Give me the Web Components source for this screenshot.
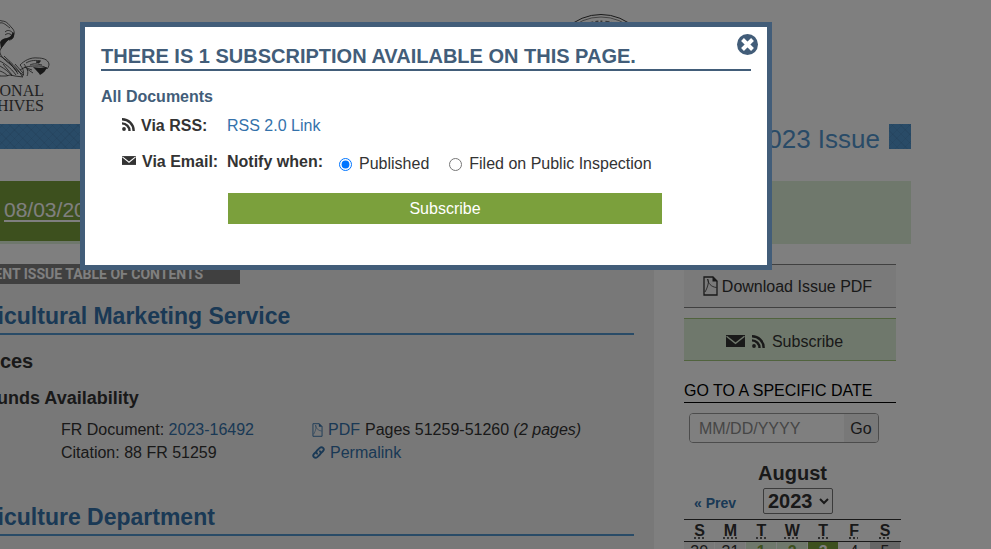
<!DOCTYPE html>
<html lang="en">
<head>
<meta charset="utf-8">
<meta name="viewport" content="width=device-width, initial-scale=1">
<title>Federal Register - Current Issue</title>
<style>
    :root {
        --link: #3472ab;
        --bar: #5396cf;
        --navy: #425d79;
        --green: #7ba03c;
        --pale-green: #dff0d8;
        --text: #333;
    }
    body {
        margin: 0;
        overflow: hidden;
        background: #fff;
        color: var(--text);
        font: 16px/23px "Liberation Sans", Arial, sans-serif;
    }
    main {
        display: block;
        margin: 0 80px 0 -42px;
    }
    .columns {
        display: flex;
        align-items: flex-start;
        gap: 30px;
        margin-top: 20px;
        padding-right: 15px;
    }
    contents-panel { flex: 1; min-width: 0; }
    .sidebar { flex: 0 0 212px; min-width: 0; }
</style>
</head>
<body>
<main>
    <site-header></site-header>
    <issue-bar>2023 Issue</issue-bar>
    <issue-banner><a slot="date" href="#">08/03/2023</a></issue-banner>
    <div class="columns">
        <contents-panel label="Current Issue Table of Contents">
            <agency-section name="Agricultural Marketing Service">
                <document-entry kind="Notices" subject="Funds Availability" number="2023-16492" citation="88 FR 51259" pages="51259-51260" count="2"></document-entry>
            </agency-section>
            <agency-section name="Agriculture Department"></agency-section>
        </contents-panel>
        <aside class="sidebar">
            <action-box><fr-icon name="pdf" size="20"></fr-icon>Download Issue PDF</action-box>
            <action-box tone="green"><fr-icon name="mail" size="19"></fr-icon><fr-icon name="rss" size="13"></fr-icon>Subscribe</action-box>
            <date-search></date-search>
            <month-calendar month="August" year="2023"></month-calendar>
        </aside>
    </div>
</main>
<subscription-modal heading="There is 1 subscription available on this page."></subscription-modal>

<script>
// name -> [viewBox width, viewBox height, markup]
const ICONS = {
    rss: [13, 13, '<circle cx="2" cy="11" r="1.9" fill="currentColor"/><path d="M0 5.4a7.5 7.5 0 0 1 7.5 7.6M0 1.3A11.6 11.6 0 0 1 11.7 13" fill="none" stroke="currentColor" stroke-width="2.4"/>'],
    mail: [19, 12, '<path d="M0 0h19v12H0z" fill="currentColor"/><path d="M.5 1.2l9 7.2 9-7.2" fill="none" stroke="var(--icon-cut, #fff)" stroke-width="1.4"/>'],
    pdf: [15, 20, '<path d="M1 1h9l4 4v14H1z" fill="none" stroke="currentColor" stroke-width="1.3"/><path d="M9.500 .5v5h5z" fill="currentColor"/><path d="M4.500 3c2 1 .5 8-2.500 13M4.500 3c.5 4 3.500 8 9 8.500" fill="none" stroke="currentColor" stroke-width=".8"/>'],
    link: [13, 13, '<g fill="none" stroke="currentColor" stroke-width="1.900" stroke-linecap="round"><path d="M5 7.700C3.700 6.300 4.400 5 5.300 4.200L7.800 1.900c2.300-2 5.200.9 3.300 3.100L9.500 6.700"/><path d="M8 5.300c1.300 1.400.6 2.700-.3 3.500l-2.500 2.300c-2.300 2-5.200-.9-3.300-3.100l1.600-1.700"/></g>'],
    close: [21, 21, '<circle cx="10.500" cy="10.500" r="10.500" fill="currentColor"/><path d="M5.500 5.500l10 10m0-10l-10 10" stroke="#fff" stroke-width="4"/>']
};

class FrIcon extends HTMLElement {
    connectedCallback() {
        const [w, h, markup] = ICONS[this.getAttribute('name')];
        const size = Number(this.getAttribute('size')) || Math.max(w, h);
        const scale = size / Math.max(w, h);
        this.attachShadow({ mode: 'open' });
        this.shadowRoot.innerHTML = `
            <style>
                :host { display: inline-block; flex: none; line-height: 0; }
                svg { display: block; }
            </style>
            <svg width="${Math.round(w * scale)}" height="${Math.round(h * scale)}" viewBox="0 0 ${w} ${h}" aria-hidden="true">${markup}</svg>
        `;
    }
}

class SiteHeader extends HTMLElement {
    connectedCallback() {
        this.attachShadow({ mode: 'open' });
        this.shadowRoot.innerHTML = `
            <style>
                :host {
                    display: flex;
                    align-items: flex-start;
                    height: 124px;
                }
                .archives {
                    width: 92px;
                    padding-top: 18px;
                    color: #444;
                    font: 16px/15px "Liberation Serif", serif;
                    text-align: right;
                    text-decoration: none;
                }
                .archives svg { display: block; margin-bottom: 4px; }
                .archives span { display: block; margin-right: 6px; }
                .seal { margin: 14px 260px 0 auto; }
            </style>
            <a class="archives" href="#">
                <svg width="92" height="61" viewBox="-42 18 92 61" fill="none" stroke="#333" stroke-width=".8" aria-hidden="true">
                    <path d="M-20 34C-12 20-4 19 2 21c5 0 7 4 10 7 3 3 3 7 0 9-2 1-4 2-6 5-3 4-7 7-6 11 2 6 8 9 12 13 4 3 7 7 12 9"/>
                    <path d="M0 23c3-1 6 2 10 5M5 32c3-3 6-1 8 1 2 4-1 7-4 7 3-2 4-5 1-6-2-1-4 0-5 1"/>
                    <path d="M13 32c2 2 1 5-1 7-2 0-4 1-6 3l-5 7-1-7c2-3 4-4 7-4 3-1 4-2 6-6z" fill="#333" stroke="none"/>
                    <path d="M0 61c5 3 10 6 16 14M0 56c6 3 13 9 18 18M0 66c5 3 9 6 12 10M0 71c3 1 6 3 8 5M4 56c5 5 13 11 18 20M0 76l6 0 4-1 5 1 8 1M20 65c3 3 5 8 2 12M24 64c3 4 5 8 3 12M15 64l8 9M9 62l8 10M3 64l9 11M-12 56c5 5 8 13 12 20"/>
                    <path d="M20 65c4-4 10-8 18-7 4 0 10 1 11 6 0 2-1 4-2 5-2-3-6-3-10-3-6 0-11 0-17 4M26 63c5-3 10-3 15-2M30 65c4-2 8-1 12 0M24 67l8 3M27 69l6 4"/>
                    <path d="M33 67c4 1 8 1 14 0-1 3-3 6-7 8-1-2-4-5-7-8z" fill="#333" stroke="none"/>
                    <path d="M36 62l4-1-1 2z" fill="#333"/>
                </svg>
                <span>NATIONAL</span>
                <span>ARCHIVES</span>
            </a>
            <svg class="seal" width="100" height="100" viewBox="0 0 100 100" fill="none" stroke="#333" aria-hidden="true">
                <circle cx="50" cy="50" r="49.500"/>
                <circle cx="50" cy="50" r="47" stroke-width=".6"/>
                <circle cx="50" cy="50" r="42" stroke-width="3" stroke-dasharray="3 2 2 3 4 2" opacity=".7"/>
                <circle cx="50" cy="50" r="35" stroke-width=".8"/>
            </svg>
        `;
    }
}

class IssueBar extends HTMLElement {
    connectedCallback() {
        this.attachShadow({ mode: 'open' });
        this.shadowRoot.innerHTML = `
            <style>
                :host {
                    display: flex;
                    justify-content: flex-end;
                    height: 25px;
                    padding-right: 22px;
                    background:
                        repeating-linear-gradient(45deg, transparent 0 5px, rgba(0, 0, 0, .05) 5px 6px),
                        repeating-linear-gradient(-45deg, transparent 0 5px, rgba(0, 0, 0, .05) 5px 6px),
                        var(--bar);
                }
                h1 {
                    margin: 0;
                    padding: 0 9px;
                    background: #fff;
                    color: var(--bar);
                    font-size: 26px;
                    font-weight: normal;
                    line-height: 30px;
                }
            </style>
            <h1><slot></slot></h1>
        `;
    }
}

class IssueBanner extends HTMLElement {
    connectedCallback() {
        this.attachShadow({ mode: 'open' });
        this.shadowRoot.innerHTML = `
            <style>
                :host {
                    display: block;
                    margin-top: 32px;
                    padding: 0 220px 3px 0;
                    background: var(--pale-green);
                }
                nav {
                    display: flex;
                    align-items: center;
                    height: 60px;
                    padding-left: 46px;
                    background: var(--green);
                }
                ::slotted(a) {
                    color: #fff;
                    font-size: 21px;
                    line-height: 20px;
                    border-bottom: 2px solid #fff;
                    text-decoration: none;
                }
            </style>
            <nav><slot name="date"></slot></nav>
        `;
    }
}

class ContentsPanel extends HTMLElement {
    connectedCallback() {
        this.attachShadow({ mode: 'open' });
        this.shadowRoot.innerHTML = `
            <style>
                :host {
                    display: block;
                    padding: 0 20px 40px 0;
                    background: #f0f0f0;
                }
                .tag {
                    width: fit-content;
                    padding: 0 37px 0 0;
                    background: #808080;
                    color: #fff;
                    font: bold 14px/20px Roboto, Arial, sans-serif;
                    text-transform: uppercase;
                }
            </style>
            <div class="tag">${this.getAttribute('label')}</div>
            <slot></slot>
        `;
    }
}

class AgencySection extends HTMLElement {
    connectedCallback() {
        this.attachShadow({ mode: 'open' });
        this.shadowRoot.innerHTML = `
            <style>
                :host { display: block; padding-top: 17px; }
                h2 {
                    margin: 0 0 14px;
                    padding-bottom: 2px;
                    border-bottom: 2px solid var(--bar);
                    color: var(--link);
                    font-size: 23px;
                    line-height: 30px;
                }
            </style>
            <h2>${this.getAttribute('name')}</h2>
            <slot></slot>
        `;
    }
}

class DocumentEntry extends HTMLElement {
    connectedCallback() {
        const get = (name) => this.getAttribute(name);
        this.attachShadow({ mode: 'open' });
        this.shadowRoot.innerHTML = `
            <style>
                :host { display: block; padding: 0 0 21px 3px; }
                h3 { margin: 0 0 13px; font-size: 20px; line-height: 24px; }
                h4 { margin: 0 0 8px 25px; font-size: 18px; line-height: 24px; }
                .details {
                    display: grid;
                    grid-template-columns: 251px 1fr;
                    padding-left: 100px;
                }
                a { color: var(--link); text-decoration: none; }
                .file { display: flex; align-items: center; gap: 5px; }
                .file a { display: flex; align-items: center; gap: 5px; }
            </style>
            <h3>${get('kind')}</h3>
            <h4>${get('subject')}</h4>
            <div class="details">
                <div>FR Document: <a href="#">${get('number')}</a></div>
                <div class="file"><a href="#"><fr-icon name="pdf" size="14"></fr-icon>PDF</a><span>Pages ${get('pages')} <em>(${get('count')} pages)</em></span></div>
                <div>Citation: ${get('citation')}</div>
                <div class="file"><a href="#"><fr-icon name="link" size="13"></fr-icon>Permalink</a></div>
            </div>
        `;
    }
}

class ActionBox extends HTMLElement {
    connectedCallback() {
        this.attachShadow({ mode: 'open' });
        this.shadowRoot.innerHTML = `
            <style>
                :host {
                    display: block;
                    margin-bottom: 10px;
                    --box: #f4f4f4;
                    --edge: #808080;
                }
                :host([tone="green"]) {
                    margin-bottom: 18px;
                    --box: var(--pale-green);
                    --edge: #a3c77c;
                    --icon-cut: var(--pale-green);
                    --gap: 7px;
                    --height: 43px;
                    --pad: 3px 11px 0 0;
                }
                a {
                    display: flex;
                    align-items: center;
                    justify-content: center;
                    gap: var(--gap, 4px);
                    box-sizing: border-box;
                    height: var(--height, 44px);
                    padding: var(--pad, 0 5px 0 0);
                    border: solid var(--edge);
                    border-width: 1px 0;
                    background: var(--box);
                    color: var(--text);
                    text-decoration: none;
                }
            </style>
            <a href="#"><slot></slot></a>
        `;
    }
}

class DateSearch extends HTMLElement {
    connectedCallback() {
        this.attachShadow({ mode: 'open' });
        this.shadowRoot.innerHTML = `
            <style>
                :host { display: block; }
                label {
                    display: block;
                    border-bottom: 1px solid #000;
                    color: #000;
                    font-size: 16px;
                    line-height: 23px;
                    text-transform: uppercase;
                }
                .group {
                    display: flex;
                    width: 190px;
                    height: 30px;
                    margin: 10px 0 0 5px;
                    box-sizing: border-box;
                    border: 1px solid #999;
                    border-radius: 4px;
                    overflow: hidden;
                }
                input, button {
                    border: 0;
                    font: inherit;
                    color: var(--text);
                }
                input { flex: 1; min-width: 0; padding: 0 9px; background: #fff; }
                input::placeholder { color: #8c8c8c; opacity: 1; }
                button { width: 34px; padding: 0; background: #f0f0f0; }
            </style>
            <label for="date">Go to a specific date</label>
            <div class="group">
                <input id="date" type="text" placeholder="MM/DD/YYYY">
                <button type="button">Go</button>
            </div>
        `;
    }
}

class MonthCalendar extends HTMLElement {
    connectedCallback() {
        const days = ['Sunday', 'Monday', 'Tuesday', 'Wednesday', 'Thursday', 'Friday', 'Saturday'];
        const week = [[30, 'other'], [31, 'other'], [1, 'issue'], [2, 'issue'], [3, 'current'], [4, ''], [5, 'weekend']];
        this.attachShadow({ mode: 'open' });
        this.shadowRoot.innerHTML = `
            <style>
                :host { display: block; width: 217px; margin-top: 18px; }
                .month {
                    font-size: 20px;
                    font-weight: bold;
                    line-height: 24px;
                    text-align: center;
                }
                .controls {
                    display: grid;
                    grid-template-columns: 79px 70px;
                    align-items: center;
                    margin: 3px 0 5px;
                }
                .controls a {
                    padding: 4px 0 0 10px;
                    color: var(--link);
                    font-size: 14px;
                    font-weight: bold;
                    line-height: 20px;
                    text-decoration: none;
                }
                select {
                    height: 26px;
                    padding: 0;
                    border: 1px solid #767676;
                    border-radius: 2px;
                    background: #fff;
                    color: var(--text);
                    font: bold 20px "Liberation Sans", Arial, sans-serif;
                }
                table { width: 100%; table-layout: fixed; border-collapse: collapse; }
                th { height: 21px; padding: 0; border: solid var(--text); border-width: 1px 0; line-height: 20px; }
                abbr { text-decoration: underline dotted; text-underline-offset: 2px; }
                td {
                    padding: 0;
                    border-right: 1px solid #fff;
                    line-height: 20px;
                    text-align: center;
                }
                .other { background: #f0f0f0; }
                .issue { background: var(--pale-green); color: var(--green); font-weight: bold; }
                .current { background: var(--green); color: #fff; font-weight: bold; }
                .weekend { background: #ccc; }
            </style>
            <div class="month">${this.getAttribute('month')}</div>
            <div class="controls">
                <a href="#">« Prev</a>
                <select aria-label="Year"><option>${this.getAttribute('year')}</option></select>
            </div>
            <table>
                <thead><tr>${days.map((d) => `<th><abbr title="${d}">${d[0]}</abbr></th>`).join('')}</tr></thead>
                <tbody><tr>${week.map(([n, cls]) => `<td class="${cls}">${n}</td>`).join('')}</tr></tbody>
            </table>
        `;
    }
}

class SubscriptionModal extends HTMLElement {
    connectedCallback() {
        this.attachShadow({ mode: 'open' });
        this.shadowRoot.innerHTML = `
            <style>
                :host {
                    position: fixed;
                    inset: 0;
                    background: rgba(0, 0, 0, .5);
                }
                .dialog {
                    position: relative;
                    box-sizing: border-box;
                    max-width: 692px;
                    margin: 22px 0 0 80px;
                    padding: 17px 16px 41px;
                    border: 5px solid var(--navy);
                    background: #fff;
                }
                .close {
                    position: absolute;
                    top: 7px;
                    right: 9px;
                    padding: 0;
                    border: 0;
                    background: none;
                    color: var(--navy);
                    cursor: pointer;
                }
                h2 {
                    margin: 0 0 14px;
                    border-bottom: 2px solid var(--navy);
                    color: var(--navy);
                    font-size: 20px;
                    line-height: 25px;
                    text-transform: uppercase;
                }
                h3 { margin: 0 0 6px; color: var(--navy); font-size: 16px; line-height: 23px; }
                a { color: var(--link); text-decoration: none; }
                .row {
                    display: grid;
                    grid-template-columns: 105px 1fr;
                    align-items: start;
                    padding-left: 21px;
                    margin-bottom: 13px;
                }
                .via { display: flex; align-items: center; gap: 6px; font-weight: bold; }
                .via fr-icon { padding-bottom: 2px; }
                .options { display: flex; align-items: flex-start; }
                .options b { margin-right: 16px; }
                .options label { display: flex; align-items: center; margin-right: 20px; padding-top: 2px; }
                .options input { width: 13px; height: 13px; margin: 2px 7px 0 0; }
                .submit {
                    display: block;
                    width: calc(100% - 216px);
                    height: 31px;
                    margin: 18px 0 0 127px;
                    border: 0;
                    background: var(--green);
                    color: #fff;
                    font: inherit;
                }
            </style>
            <section class="dialog" role="dialog" aria-modal="true">
                <button class="close" type="button" aria-label="Close"><fr-icon name="close" size="21"></fr-icon></button>
                <h2>${this.getAttribute('heading')}</h2>
                <h3>All Documents</h3>
                <div class="row">
                    <div class="via"><fr-icon name="rss" size="13"></fr-icon>Via RSS:</div>
                    <a href="#">RSS 2.0 Link</a>
                </div>
                <form>
                    <div class="row">
                        <div class="via"><fr-icon name="mail" size="14"></fr-icon>Via Email:</div>
                        <div class="options">
                            <b>Notify when:</b>
                            <label><input type="radio" name="when" checked>Published</label>
                            <label><input type="radio" name="when">Filed on Public Inspection</label>
                        </div>
                    </div>
                    <button class="submit" type="button">Subscribe</button>
                </form>
            </section>
        `;
    }
}

customElements.define('fr-icon', FrIcon);
customElements.define('site-header', SiteHeader);
customElements.define('issue-bar', IssueBar);
customElements.define('issue-banner', IssueBanner);
customElements.define('contents-panel', ContentsPanel);
customElements.define('agency-section', AgencySection);
customElements.define('document-entry', DocumentEntry);
customElements.define('action-box', ActionBox);
customElements.define('date-search', DateSearch);
customElements.define('month-calendar', MonthCalendar);
customElements.define('subscription-modal', SubscriptionModal);
</script>
</body>
</html>
